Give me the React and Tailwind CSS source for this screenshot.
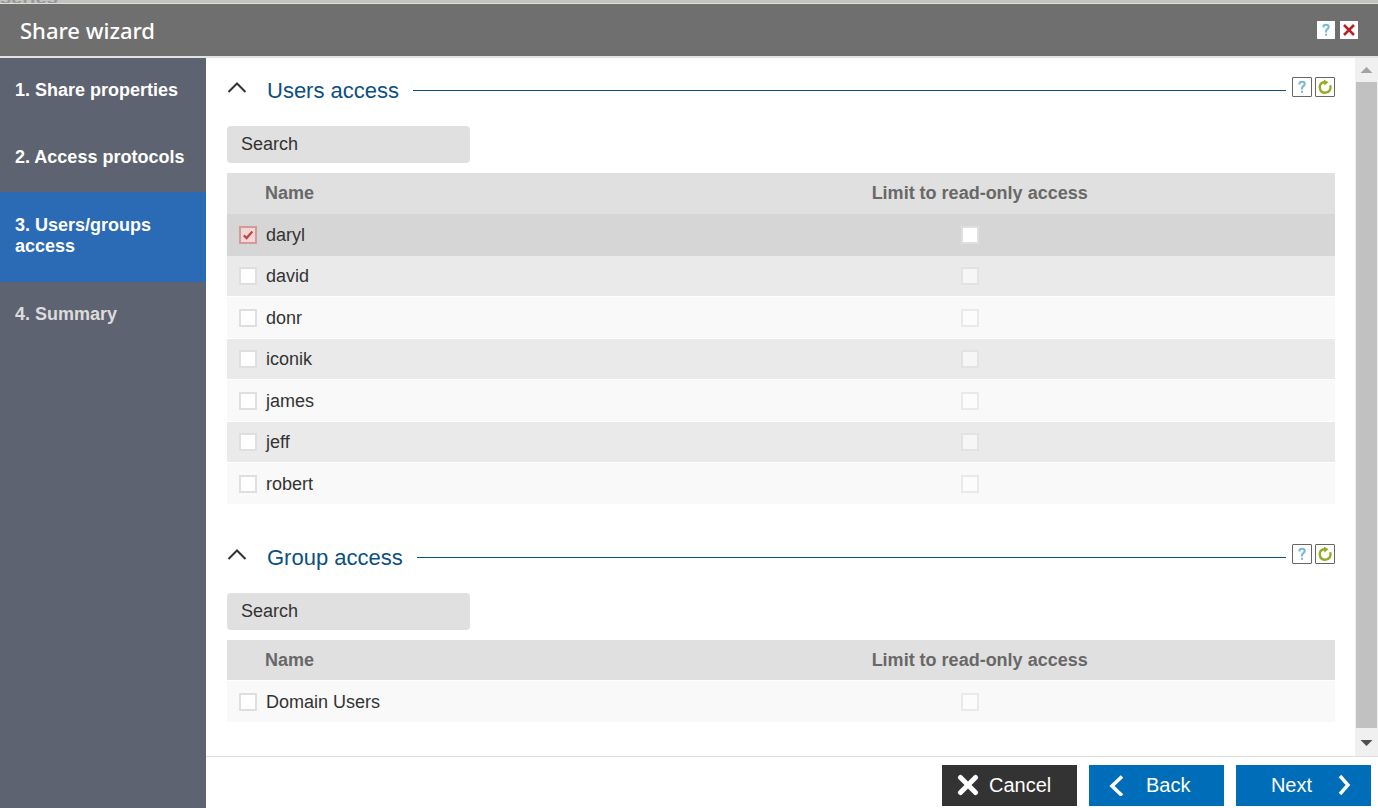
import { useState } from "react";

const steps = [
  { label: "1. Share properties", state: "done" },
  { label: "2. Access protocols", state: "done" },
  { label: "3. Users/groups access", state: "active" },
  { label: "4. Summary", state: "pending" },
];

const stepStyles = {
  done: "pt-[22px] pb-6 text-white",
  active: "bg-[#2b6ab4] pt-[23px] pb-[25px] text-white",
  pending: "pt-[22px] pb-6 text-[#dcdcdc]",
};

const users = ["daryl", "david", "donr", "iconik", "james", "jeff", "robert"];
const groups = ["Domain Users"];

function HelpGlyph() {
  return (
    <svg viewBox="0 0 16 16" className="h-4 w-4" fill="none" aria-hidden="true">
      <path d="M5.500 5.600V4.500C5.500 3.200 6.400 2.800 8 2.800S10.700 3.500 10.700 5C10.700 6.900 8 7.200 8 9V10.400" stroke="#79b9d3" strokeWidth="2.100" />
      <path d="M7 11.700h2v2H7z" fill="#79b9d3" />
    </svg>
  );
}

function RefreshGlyph() {
  return (
    <svg viewBox="0 0 18 18" className="h-[18px] w-[18px]" fill="none" aria-hidden="true">
      <path d="M14.200 7.200A5.500 5.500 0 1 1 4.200 6.800C5 5.300 6.500 4.300 8.600 4.300" stroke="#94ad22" strokeWidth="2.400" />
      <path d="M7.800 1.600 12.500 4.200 8.400 7.400z" fill="#94ad22" />
    </svg>
  );
}

function CheckBox({ label, id, checked, disabled, onChange }) {
  return (
    <span className="grid h-[18px] w-[18px] place-items-center">
      <input
        id={id}
        type="checkbox"
        aria-label={label}
        checked={checked}
        disabled={disabled}
        onChange={onChange}
        className="col-start-1 row-start-1 h-[18px] w-[18px] appearance-none border-2 border-[#dfdfdf] bg-white checked:border-[#d09c99] checked:bg-[#f3d6d5] disabled:opacity-60"
      />
      {checked && (
        <svg viewBox="0 0 14 14" className="pointer-events-none col-start-1 row-start-1 h-[14px] w-[14px]" fill="none" aria-hidden="true">
          <path d="M2.800 7.400 5.600 10 11.400 3.600" stroke="#b94a48" strokeWidth="2.300" />
        </svg>
      )}
    </span>
  );
}

function AccessSection({ title, prefix, names, initial }) {
  const [selected, setSelected] = useState(initial);
  const [readOnly, setReadOnly] = useState([]);
  const [query, setQuery] = useState("");
  const toggle = (list, set, name) =>
    set(list.includes(name) ? list.filter((n) => n !== name) : [...list, name]);
  const shown = names.filter((n) => n.toLowerCase().includes(query.toLowerCase()));
  const headBorder = selected.includes(shown[0]) ? "border-[#e0e0e0]" : "border-white";

  return (
    <section>
      <div className="flex h-[27px] items-center">
        <button type="button" aria-label={"Collapse " + title} className="mr-5 self-start">
          <svg viewBox="0 0 20 20" className="h-5 w-5" fill="none" aria-hidden="true">
            <path d="M1.500 15 10 6.500l8.500 8.500" stroke="#333" strokeWidth="2" />
          </svg>
        </button>
        <h2 className="mr-[14px] text-[22px] leading-[27px] text-[#0b5082]">{title}</h2>
        <div className="mr-[6px] h-px flex-1 bg-[#0b5082]" />
        <div className="flex gap-[3px] self-start">
          <button type="button" aria-label="Help" className="grid h-5 w-5 place-items-center rounded-[1px] border border-[#666] bg-white">
            <HelpGlyph />
          </button>
          <button type="button" aria-label="Refresh" className="grid h-5 w-5 place-items-center rounded-[1px] border border-[#666] bg-white">
            <RefreshGlyph />
          </button>
        </div>
      </div>
      <input
        type="text"
        aria-label={"Search " + title}
        placeholder="Search"
        value={query}
        onChange={(e) => setQuery(e.target.value)}
        className="mt-[22px] block h-[37px] w-[243px] rounded bg-[#e0e0e0] px-[14px] pb-px text-lg text-[#333] outline-none placeholder:text-[#333]"
      />
      <table className="mt-[10px] w-full table-fixed border-separate border-spacing-0 text-left text-lg leading-5">
        <thead>
          <tr className="h-[41px] bg-[#e0e0e0] text-[#686868]">
            <th className={"w-[58%] border-b pl-[38px] font-bold " + headBorder}>Name</th>
            <th className={"border-b pl-[2px] font-bold " + headBorder}>Limit to read-only access</th>
          </tr>
        </thead>
        <tbody>
          {shown.map((name, i) => {
            const on = selected.includes(name);
            const striped = names.length > 1 && i % 2 === 1;
            const tone = on ? "bg-[#d6d6d6]" : striped ? "bg-[#eaeaea]" : "bg-[#f9f9f9]";
            const line = on ? "border-[#d6d6d6]" : "border-white";
            const id = prefix + "-" + i;
            return (
              <tr key={name} className={"odd:h-[42px] even:h-[41px] " + tone}>
                <td className={"border-b pl-3 " + line}>
                  <div className="flex items-center gap-[9px]">
                    <CheckBox id={id} checked={on} onChange={() => toggle(selected, setSelected, name)} />
                    <label htmlFor={id} className="text-[#333]">{name}</label>
                  </div>
                </td>
                <td className={"border-b pl-[91px] " + line}>
                  <CheckBox
                    label={"Limit " + name + " to read-only access"}
                    checked={readOnly.includes(name)}
                    disabled={!on}
                    onChange={() => toggle(readOnly, setReadOnly, name)}
                  />
                </td>
              </tr>
            );
          })}
        </tbody>
      </table>
    </section>
  );
}

export default function App() {
  return (
    <div className="flex min-h-screen flex-col bg-white font-['Liberation_Sans',Arial,sans-serif]">
      <div className="flex h-1 items-end overflow-hidden border-b border-[#dededc] bg-[#c3c4c0] text-xl leading-[12px] font-bold text-[#999a97]">
        <span>series</span>
      </div>
      <header className="flex h-[54px] items-center justify-between border-b-2 border-[#e3e3e3] bg-[#6f6f70] px-5">
        <h1 className="font-['Noto_Sans',sans-serif] text-[22px] font-medium text-white">Share wizard</h1>
        <div className="flex gap-[5px]">
          <button type="button" aria-label="Help" className="grid h-[18px] w-[18px] place-items-center bg-white">
            <HelpGlyph />
          </button>
          <button type="button" aria-label="Close" className="grid h-[18px] w-[18px] place-items-center bg-white">
            <svg viewBox="0 0 18 18" className="h-[18px] w-[18px]" fill="none" aria-hidden="true">
              <path d="M4 4 14 14M14 4 4 14" stroke="#b92025" strokeWidth="2.500" />
            </svg>
          </button>
        </div>
      </header>
      <div className="flex flex-1">
        <nav className="w-[206px] shrink-0 bg-[#5e6371] text-lg leading-[21px] font-bold">
          {steps.map((step) => (
            <a
              key={step.label}
              href="#"
              aria-current={step.state === "active" ? "step" : undefined}
              className={"block px-[15px] " + stepStyles[step.state]}
            >
              {step.label}
            </a>
          ))}
        </nav>
        <div className="flex min-w-0 flex-1 flex-col">
          <div className="flex flex-1">
            <main className="flex min-w-0 flex-1 flex-col gap-[39px] pt-[19px] pr-5 pl-[21px]">
              <AccessSection title="Users access" prefix="user" names={users} initial={["daryl"]} />
              <AccessSection title="Group access" prefix="group" names={groups} initial={[]} />
            </main>
            <div className="flex w-[23px] flex-col bg-[#f0f0f0]" aria-hidden="true">
              <svg viewBox="0 0 23 24" className="h-6 w-[23px]">
                <path d="M5.500 15 11.500 9l6 6z" fill="#a3a3a3" />
              </svg>
              <div className="mx-px flex-1 bg-[#c1c1c1]" />
              <svg viewBox="0 0 23 28" className="h-7 w-[23px]">
                <path d="M5.500 12h12l-6 6z" fill="#505050" />
              </svg>
            </div>
          </div>
          <footer className="flex justify-end gap-3 border-t border-[#dedede] pt-2 pr-[7px] pb-[2px] text-xl text-white">
            <button type="button" className="flex h-[41px] w-[135px] items-center gap-[10px] bg-[#333] pb-px pl-[15px]">
              <svg viewBox="0 0 22 22" className="h-[22px] w-[22px]" fill="none" aria-hidden="true">
                <path d="M3.500 3.500 18.500 18.500M18.500 3.500 3.500 18.500" stroke="#fff" strokeWidth="5" strokeLinecap="round" />
              </svg>
              Cancel
            </button>
            <button type="button" className="flex h-[41px] w-[135px] items-center gap-[21px] bg-[#006db8] pb-px pl-[18px]">
              <svg viewBox="0 0 18 22" className="h-[22px] w-[18px]" fill="none" aria-hidden="true">
                <path d="M15 2.500 5 12l10 9.500" stroke="#fff" strokeWidth="3.600" />
              </svg>
              Back
            </button>
            <button type="button" className="flex h-[41px] w-[135px] items-center justify-end gap-[23px] bg-[#006db8] pr-[18px] pb-px">
              Next
              <svg viewBox="0 0 18 22" className="h-[22px] w-[18px]" fill="none" aria-hidden="true">
                <path d="M5 2 13 11 5 20" stroke="#fff" strokeWidth="3.400" />
              </svg>
            </button>
          </footer>
        </div>
      </div>
    </div>
  );
}
